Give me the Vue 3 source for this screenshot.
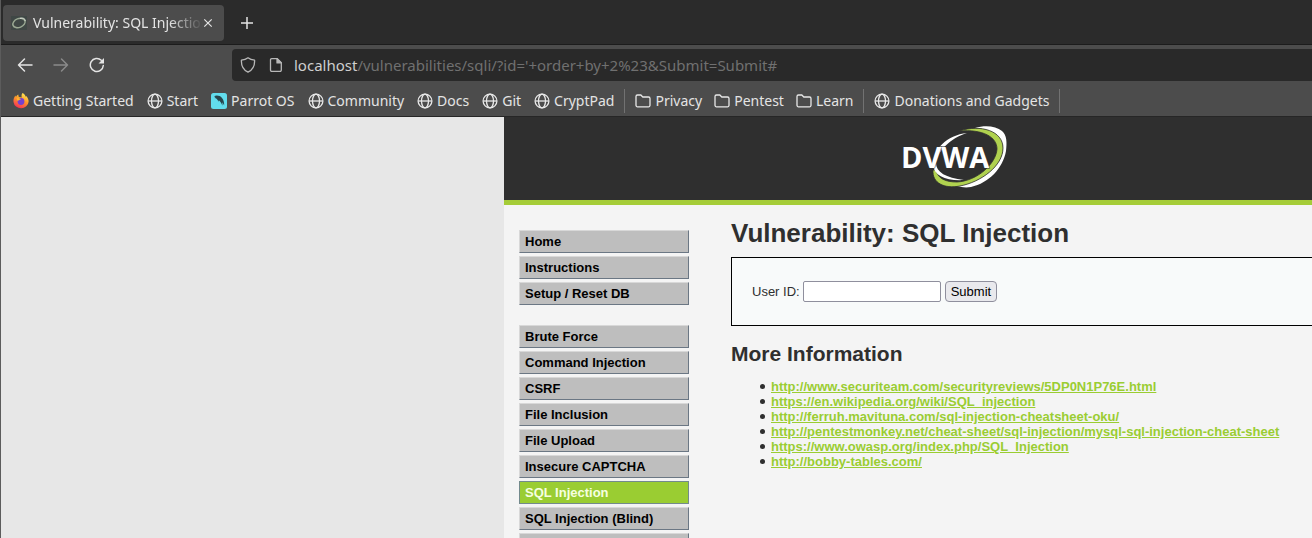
<script setup>
import { ref } from 'vue'

const userId = ref('')
const address = ref("localhost/vulnerabilities/sqli/?id='+order+by+2%23&Submit=Submit#")

const bookmarkGroups = [
  [
    { icon: 'firefox', label: 'Getting Started' },
    { icon: 'globe', label: 'Start' },
    { icon: 'parrot', label: 'Parrot OS' },
    { icon: 'globe', label: 'Community' },
    { icon: 'globe', label: 'Docs' },
    { icon: 'globe', label: 'Git' },
    { icon: 'globe', label: 'CryptPad' },
  ],
  [
    { icon: 'folder', label: 'Privacy' },
    { icon: 'folder', label: 'Pentest' },
    { icon: 'folder', label: 'Learn' },
  ],
  [{ icon: 'globe', label: 'Donations and Gadgets' }],
]

const menuBlocks = [
  ['Home', 'Instructions', 'Setup / Reset DB'],
  [
    'Brute Force',
    'Command Injection',
    'CSRF',
    'File Inclusion',
    'File Upload',
    'Insecure CAPTCHA',
    'SQL Injection',
    'SQL Injection (Blind)',
    'Weak Session IDs',
  ],
]

const links = [
  'http://www.securiteam.com/securityreviews/5DP0N1P76E.html',
  'https://en.wikipedia.org/wiki/SQL_injection',
  'http://ferruh.mavituna.com/sql-injection-cheatsheet-oku/',
  'http://pentestmonkey.net/cheat-sheet/sql-injection/mysql-sql-injection-cheat-sheet',
  'https://www.owasp.org/index.php/SQL_Injection',
  'http://bobby-tables.com/',
]
</script>

<template>
  <div class="window">
    <div class="tabstrip">
      <div class="tab">
        <svg class="favicon" viewBox="0 0 16 16">
          <rect y="1" width="16" height="14" fill="#3f4745" />
          <ellipse cx="8" cy="8" rx="6.400" ry="4.400" transform="rotate(-22 8 8)" fill="none" stroke="#9aa893" stroke-width="1.500" />
          <path d="M9 3.400c3-.8 5.400 0 5.200 2.600" fill="none" />
        </svg>
        <span class="tab-title">Vulnerability: SQL Injection</span>
        <button class="close" aria-label="Close tab">
          <svg viewBox="0 0 10 10"><path d="M1.300 1.300l7.400 7.400M8.700 1.300l-7.400 7.400" /></svg>
        </button>
      </div>
      <button class="new-tab" aria-label="New tab">
        <svg viewBox="0 0 14 14"><path d="M7 1v12M1 7h12" /></svg>
      </button>
    </div>

    <div class="toolbar">
      <button class="nav" aria-label="Back">
        <svg viewBox="0 0 16 16"><path d="M15 8H1.500M7.500 2L1.500 8l6 6" /></svg>
      </button>
      <button class="nav dim" aria-label="Forward">
        <svg viewBox="0 0 16 16"><path d="M1 8h13.500M8.500 2l6 6-6 6" /></svg>
      </button>
      <button class="nav" aria-label="Reload">
        <svg viewBox="0 0 16 16">
          <path d="M14.300 8.500A6.500 6.500 0 1 1 12.300 3.300" />
          <path d="M15 1v5.500H9.500z" class="solid" />
        </svg>
      </button>
      <div class="address">
        <svg viewBox="0 0 16 16"><path d="M8 .8C10 2.400 12.400 3 14.600 3.200c.2 5-1.200 9.500-6.600 12C2.600 12.700 1.200 8.200 1.400 3.200 3.600 3 6 2.400 8 .8z" /></svg>
        <svg class="doc" viewBox="0 0 16 16">
          <path d="M3.700 1.700h5.600l4 4v7.400a1.200 1.200 0 0 1-1.200 1.200H3.700a1.200 1.200 0 0 1-1.200-1.200V2.900a1.200 1.200 0 0 1 1.200-1.200z" />
          <path d="M9 1.700v4.200h4.300z" class="solid" />
        </svg>
        <div class="url" role="textbox" aria-label="Address" tabindex="0">
          <b>{{ address.slice(0, 9) }}</b>{{ address.slice(9) }}
        </div>
      </div>
    </div>

    <nav class="bookmarks">
      <div v-for="(group, g) in bookmarkGroups" :key="g" class="group">
        <a v-for="item in group" :key="item.label" href="#" class="bookmark">
          <svg v-if="item.icon === 'globe'" viewBox="0 0 16 16" class="line">
            <circle cx="8" cy="8" r="6.900" />
            <ellipse cx="8" cy="8" rx="3.500" ry="6.900" />
            <path d="M1.300 8h13.400" />
          </svg>
          <svg v-else-if="item.icon === 'folder'" viewBox="0 0 16 16" class="line">
            <path d="M1 3.500A1.500 1.500 0 0 1 2.500 2h3.300l2 2h5.700A1.500 1.500 0 0 1 15 5.500v6.800a1.500 1.500 0 0 1-1.500 1.500h-11A1.500 1.500 0 0 1 1 12.300z" />
          </svg>
          <svg v-else-if="item.icon === 'parrot'" viewBox="0 0 16 16">
            <rect width="16" height="16" rx="2.500" fill="#62dcec" />
            <path d="M3 3.200C5.500 2 9 2.500 11 5c1.600 2 2.200 4.200 2.200 7.500l-1.800-3.200v3.400C10.500 10.300 9.300 8.300 7.800 7.300l-.2 1.500C6.800 6.800 5.600 5 3.500 4.900l1-.9z" fill="#27464d" />
          </svg>
          <svg v-else viewBox="0 0 16 16">
            <defs>
              <linearGradient id="flame" x1=".75" y1="0" x2=".3" y2="1">
                <stop offset="0" stop-color="#fff05a" />
                <stop offset=".45" stop-color="#ff9a28" />
                <stop offset="1" stop-color="#f52b58" />
              </linearGradient>
            </defs>
            <path d="M9.500 0c2 1 2.800 2.500 3.200 3.700l.5-.8c1.600 1.600 2.500 3.700 2.400 5.800A7.600 7.300 0 0 1 .5 9C.2 6.800 1 4.300 2.400 2.500l.6 1.600C3.600 2.800 4.300 2 5.200 1.600L5.800 4l3 .4C8.200 2.800 8.600 1.200 9.500 0z" fill="url(#flame)" />
            <circle cx="8" cy="8.500" r="3.400" fill="#7541cf" />
            <path d="M3.500 5.200c2-.6 3.500.2 4.500 1.200-2 .1-2.200 1.400-3.500 1.300z" fill="#ffb52d" />
          </svg>
          <span>{{ item.label }}</span>
        </a>
      </div>
    </nav>

    <div class="viewport">
      <div class="container">
        <header class="header">
          <svg class="logo" viewBox="0 0 110 64" role="img" aria-label="DVWA">
            <path d="M76 3C86 0 97 1 103 6c5 4 5 12 4 20-3 17-17 32-35 36-6 1-10 0-14-1 22-3 46-20 46-38C104 13 93 4 76 3z" fill="#fff" />
            <path d="M60 6C82 -1 104 6 104 23c0 18-22 34-43 38-16 3-28-3-27-16h3c2 9 10 12 21 12 20-1 39-18 40-33C98 12 84 4 60 6z" fill="#b0d24f" stroke="#2f2f2f" stroke-width=".8" />
            <path d="M68 8C52 13 38 26 37 38c0 9 10 15 28 17-18 1-30-4-31-15C33 25 48 10 68 8z" fill="#fff" />
            <text x="2" y="43">DVWA</text>
          </svg>
        </header>
        <div class="columns">
          <nav class="menu">
            <ul v-for="(block, b) in menuBlocks" :key="b">
              <li v-for="item in block" :key="item">
                <a href="#" :class="{ selected: item === 'SQL Injection' }">{{ item }}</a>
              </li>
            </ul>
          </nav>
          <main class="body">
            <h1>Vulnerability: SQL Injection</h1>
            <form class="panel" @submit.prevent>
              <label for="uid">User ID:</label>
              <input id="uid" v-model="userId" type="text" />
              <button type="submit">Submit</button>
            </form>
            <h2>More Information</h2>
            <ul class="links">
              <li v-for="link in links" :key="link"><a :href="link">{{ link }}</a></li>
            </ul>
          </main>
        </div>
      </div>
    </div>
  </div>
</template>

<style>
html,
body {
  margin: 0;
  height: 100%;
  overflow: hidden;
}
#app {
  height: 100%;
}
</style>

<style scoped>
* {
  box-sizing: border-box;
}
.window {
  display: flex;
  flex-direction: column;
  height: 100%;
  overflow: hidden;
  border-left: 1px solid #5c5c5c;
  background: #4c4c4c;
  font: 14px/20px "Noto Sans", sans-serif;
  color: #e4e4e4;
}
svg {
  display: block;
  width: 16px;
  height: 16px;
  flex: none;
}
button {
  font: inherit;
  color: inherit;
}
.tabstrip button,
.toolbar button {
  border: 0;
  padding: 0;
  background: none;
}
.tabstrip {
  flex: none;
  display: flex;
  align-items: center;
  height: 45px;
  padding: 5px 2px 4px;
  background: #2b2b2b;
  border-bottom: 1px solid #1c1c1c;
}
.tab {
  display: flex;
  align-items: center;
  width: 221px;
  height: 36px;
  padding: 0 11px 0 8px;
  border-radius: 4px;
  background: #4c4c4c;
}
.tab-title {
  flex: 1;
  min-width: 0;
  margin-left: 6px;
  overflow: hidden;
  white-space: nowrap;
  mask-image: linear-gradient(to right, #000 80%, transparent);
}
.close svg {
  width: 10px;
  height: 10px;
}
.tabstrip path,
.nav path {
  fill: none;
  stroke: currentColor;
  stroke-width: 1.5;
}
.tabstrip .favicon path {
  stroke: #d5dad2;
  stroke-width: 1;
}
.close path {
  stroke-width: 1.2;
}
.new-tab {
  margin-left: 16px;
}
.new-tab svg {
  width: 14px;
  height: 14px;
}
.toolbar {
  flex: none;
  display: flex;
  align-items: center;
  height: 40px;
  padding: 4px 0 4px 16px;
}
.nav {
  width: 16px;
  margin-right: 20px;
}
.nav path {
  stroke-linecap: round;
  stroke-linejoin: round;
}
.nav.dim {
  color: #8a8a8a;
}
.address {
  flex: 1;
  display: flex;
  align-items: center;
  height: 32px;
  margin-left: 107px;
  padding-left: 8px;
  border-radius: 4px 0 0 4px;
  background: #292929;
  color: #b8b8b8;
}
.address path {
  fill: none;
  stroke: currentColor;
  stroke-width: 1.3;
  stroke-linejoin: round;
}
.toolbar path.solid {
  fill: currentColor;
}
.nav path.solid {
  stroke: none;
}
.doc {
  margin-left: 12px;
}
.url {
  margin-left: 10px;
  font-size: 15px;
  color: #707070;
  white-space: nowrap;
}
.url b {
  font-weight: 400;
  color: #cfcfcf;
}
.bookmarks {
  flex: none;
  display: flex;
  align-items: center;
  height: 32px;
  padding-left: 12px;
  border-bottom: 1px solid #262626;
}
.group {
  display: flex;
  align-items: center;
  gap: 13px;
  height: 24px;
  padding-right: 10px;
  margin-right: 10px;
  border-right: 1px solid #727272;
}
.group + .group {
  gap: 12px;
}
.bookmark {
  display: flex;
  align-items: center;
  gap: 4px;
  color: inherit;
  text-decoration: none;
  white-space: nowrap;
}
.line {
  fill: none;
  stroke: #e8e8e8;
  stroke-width: 1.3;
}
.viewport {
  flex: 1;
  min-height: 0;
  overflow: hidden;
  padding-left: 503px;
  background: #e7e7e7;
  font: 13px/15px "Liberation Sans", Arial, sans-serif;
  color: #2f2f2f;
}
.container {
  min-width: 900px;
  min-height: 100%;
  background: #f4f4f4;
}
.header {
  height: 88px;
  padding-top: 8px;
  border-bottom: 5px solid #a5cc38;
  background: #2f2f2f;
}
.logo {
  width: 110px;
  height: 64px;
  margin: 0 auto;
}
.logo text {
  font: 700 29px "Open Sans", sans-serif;
  fill: #fff;
  stroke: #2f2f2f;
  stroke-width: 1px;
  paint-order: stroke;
}
.columns {
  display: flex;
}
.menu {
  flex: none;
  width: 185px;
  padding: 25px 0 0 15px;
}
.menu ul {
  display: flex;
  flex-direction: column;
  gap: 3px;
  margin: 0 0 20px;
  padding: 0;
  list-style: none;
}
.menu a {
  display: block;
  height: 23px;
  padding: 3px 5px;
  border: 1px solid;
  border-color: #d8d8d8 #6b7784 #6b7784 #d8d8d8;
  background: #bebebe;
  color: #000;
  font-weight: 700;
  text-decoration: none;
}
.menu a.selected {
  border-color: #738a8c;
  background: #9acd32;
  color: #f6ffe0;
}
.body {
  flex: 1;
  padding: 13px 20px 0 42px;
}
h1 {
  margin: 0 0 9px;
  font-size: 26px;
  line-height: 30px;
}
.panel {
  display: flex;
  align-items: center;
  height: 69px;
  padding: 0 20px;
  border: 1px solid #000;
  background: #f8fafa;
}
.panel input {
  width: 138px;
  height: 21px;
  margin: 0 4px 0 3px;
  border: 1px solid #8f8f9d;
  border-radius: 2px;
  background: #fff;
}
.panel button {
  height: 21px;
  padding: 0 5px;
  border: 1px solid #8f8f9d;
  border-radius: 4px;
  background: #e9e9ed;
  color: #000;
}
h2 {
  margin: 16px 0 13px;
  font-size: 21px;
  line-height: 24px;
}
.links {
  margin: 0;
  padding-left: 29px;
  list-style: none;
}
.links li {
  display: flex;
  align-items: center;
  gap: 6px;
}
.links li::before {
  content: "";
  width: 5px;
  height: 5px;
  border-radius: 50%;
  background: #2f2f2f;
}
.links a {
  color: #9acd32;
  font-weight: 700;
}
</style>
